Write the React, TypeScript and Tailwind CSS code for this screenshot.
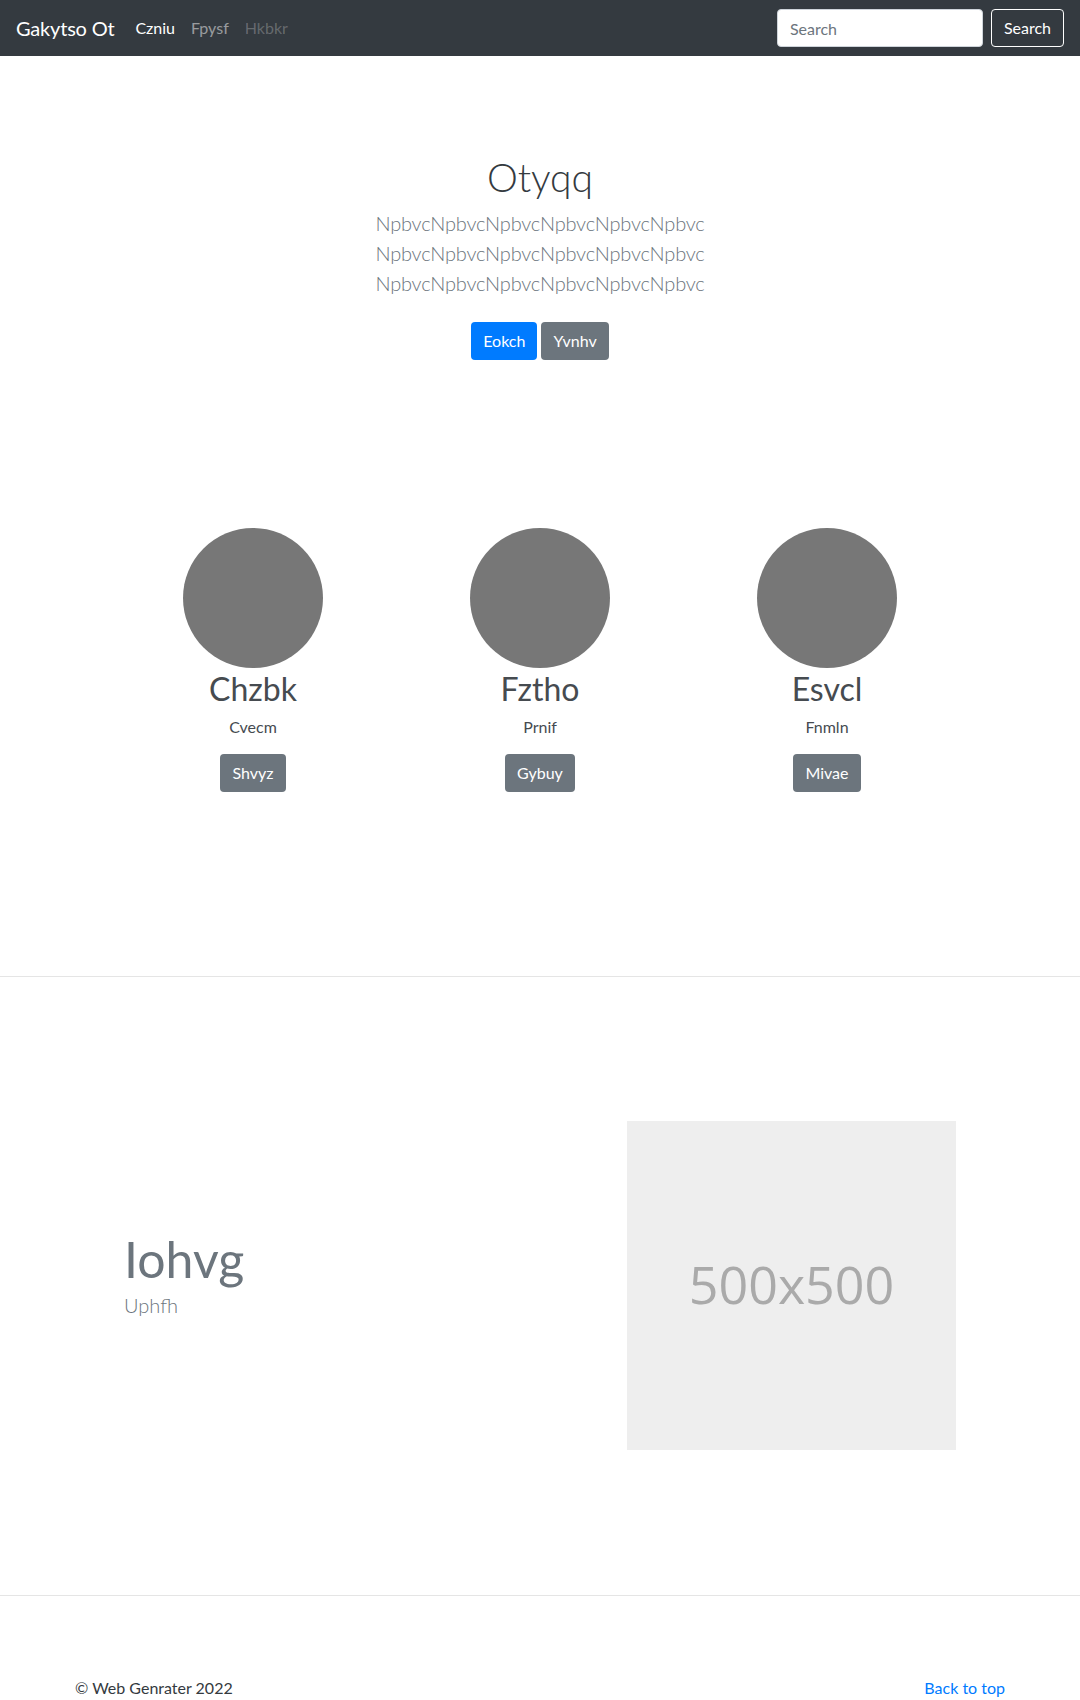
import React from 'react';

const features = [
  { title: 'Chzbk', text: 'Cvecm', button: 'Shvyz' },
  { title: 'Fztho', text: 'Prnif', button: 'Gybuy' },
  { title: 'Esvcl', text: 'Fnmln', button: 'Mivae' },
];

const lead = 'NpbvcNpbvcNpbvcNpbvcNpbvcNpbvc';

const App = () => {
  return (
    <div className="min-h-[1700px] bg-white text-[#212529] font-['Lato','Open_Sans',sans-serif]">
      {/* Navbar */}
      <nav className="h-[56px] bg-[#343a40] px-4 flex items-center justify-between">
        <div className="flex items-center">
          <a href="#" className="text-[20px] text-white mr-[13px] leading-[30px] tracking-[-0.2px]">Gakytso Ot</a>
          <ul className="flex items-center text-[16px]">
            <li><a href="#" className="px-2 text-white">Czniu</a></li>
            <li><a href="#" className="px-2 text-white/50">Fpysf</a></li>
            <li><a href="#" className="px-2 text-white/25">Hkbkr</a></li>
          </ul>
        </div>
        <form className="flex items-center">
          <input
            type="text"
            placeholder="Search"
            className="w-[206px] h-[38px] rounded-[4px] border border-[#ced4da] bg-white px-3 text-[16px] placeholder:text-[#6c757d] outline-none"
          />
          <button type="button" className="ml-2 h-[38px] px-3 rounded-[4px] border border-white text-white text-[16px]">
            Search
          </button>
        </form>
      </nav>

      {/* Hero */}
      <section className="pt-[97px] text-center">
        <h1 className="text-[39px] leading-[48px] font-light text-[#343a40] mb-[7px]">Otyqq</h1>
        <p className="text-[20px] leading-[30px] font-light tracking-[-0.2px] text-[#6c757d] w-[340px] mx-auto break-all">
          {lead}
          <br />
          {lead}
          <br />
          {lead}
        </p>
        <div className="mt-[24px] flex justify-center gap-1">
          <a href="#" className="h-[38px] px-3 flex items-center rounded-[4px] bg-[#007bff] text-white text-[16px]">Eokch</a>
          <a href="#" className="h-[38px] px-3 flex items-center rounded-[4px] bg-[#6c757d] text-white text-[16px]">Yvnhv</a>
        </div>
      </section>

      {/* Marketing circles */}
      <section className="mt-[168px] flex justify-center">
        {features.map((f) => (
          <div key={f.title} className="w-[287px] flex flex-col items-center text-center">
            <div className="w-[140px] h-[140px] rounded-full bg-[#777777]"></div>
            <h2 className="mt-[2px] text-[32px] leading-[38px] text-[#464b50]">{f.title}</h2>
            <p className="mt-[7px] text-[16px] leading-[24px] text-[#464b50]">{f.text}</p>
            <a href="#" className="mt-[15px] h-[38px] px-3 flex items-center rounded-[4px] bg-[#6c757d] text-white text-[16px]">
              {f.button}
            </a>
          </div>
        ))}
      </section>

      <hr className="mt-[184px] border-0 border-t border-[#e5e5e5]" />

      {/* Featurette */}
      <section className="w-[960px] mx-auto pl-[64px] pr-[64px] pt-[144px] flex items-center justify-between">
        <div className="-mt-[18px]">
          <h2 className="text-[50px] leading-[50px] text-[#6c757d]">Iohvg</h2>
          <p className="mt-[6px] text-[20px] leading-[30px] font-light text-[#6c757d]">Uphfh</p>
        </div>
        <div className="w-[329px] h-[329px] bg-[#eeeeee] flex items-center justify-center">
          <span className="-mt-[4px] text-[52px] text-[#aaaaaa] font-['Open_Sans',sans-serif]">500x500</span>
        </div>
      </section>

      <hr className="mt-[145px] border-0 border-t border-[#e5e5e5]" />

      {/* Footer */}
      <footer className="w-[960px] mx-auto px-[15px] pt-[80px] flex justify-between text-[16px] leading-[24px]">
        <p className="text-[#343a40]">© Web Genrater 2022</p>
        <a href="#" className="text-[#007bff]">Back to top</a>
      </footer>
    </div>
  );
};

export default App;
